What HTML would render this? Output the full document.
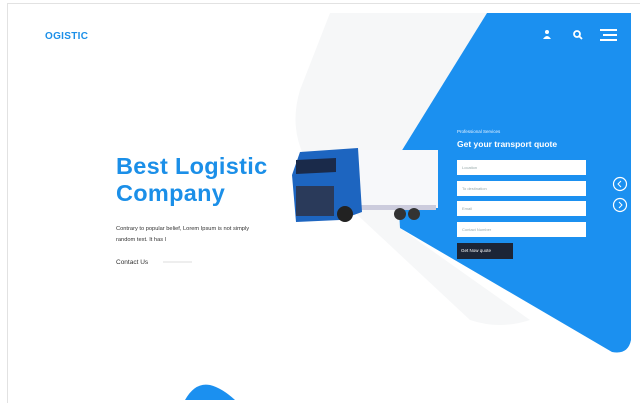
<!DOCTYPE html>
<html><head><meta charset="utf-8"><style>
*{margin:0;padding:0;box-sizing:border-box}
body{width:640px;height:400px;overflow:hidden;background:#fff;position:relative;font-family:"Liberation Sans",sans-serif}
.a{position:absolute}
.inp{position:absolute;left:457px;width:129px;height:15px;background:#fff;font-size:4px;color:#9aa;padding:5px 0 0 5px}
</style></head><body>
<div class="a" style="left:7px;top:3px;width:640px;height:1px;background:#e2e2e2"></div>
<div class="a" style="left:7px;top:3px;width:1px;height:400px;background:#e2e2e2"></div>
<svg class="a" style="left:0;top:0" width="640" height="400">
<path d="M330 13 L487 13 L470 60 L395 160 L400 228 L530 320 Q500 330 470 320 L320 180 Q285 140 300 90 Z" fill="#f6f7f8"/>
<path d="M487 13 L631 13 L631 340 Q628 355 612 352 L400 228 L396 160 Z" fill="#1b90f0"/>
<path d="M185 400 Q195 382 210 385 Q222 388 235 400 Z" fill="#1b90f0"/>
<rect x="358" y="150" width="80" height="58" fill="#f7f8fa"/>
<rect x="358" y="205" width="78" height="5" fill="#ccd"/>
<path d="M300 152 L358 148 L362 212 L340 220 L296 222 L292 175 Z" fill="#1d65c0"/>
<path d="M296 160 L336 158 L336 172 L296 174 Z" fill="#1a2a4a"/>
<rect x="296" y="186" width="38" height="30" fill="#2a3a5a"/>
<circle cx="345" cy="214" r="8" fill="#222"/>
<circle cx="400" cy="214" r="6" fill="#333"/>
<circle cx="414" cy="214" r="6" fill="#333"/>
<circle cx="620" cy="184" r="6.5" fill="none" stroke="#fff" stroke-width="1.2"/>
<circle cx="620" cy="205" r="6.5" fill="none" stroke="#fff" stroke-width="1.2"/>
<path d="M621 181 L618 184 L621 187" fill="none" stroke="#fff" stroke-width="1"/>
<path d="M619 202 L622 205 L619 208" fill="none" stroke="#fff" stroke-width="1"/>
<circle cx="547" cy="32" r="2" fill="#fff"/><path d="M543 39 Q547 33 551 39 Z" fill="#fff"/>
<circle cx="577" cy="34" r="3" fill="none" stroke="#fff" stroke-width="1.8"/><path d="M579 36 L582 39" stroke="#fff" stroke-width="1.8"/>
<path d="M600 30 H617 M603 35 H617 M600 40 H617" stroke="#fff" stroke-width="2"/>
<line x1="163" y1="262" x2="192" y2="262" stroke="#bbb" stroke-width="0.6"/>
</svg>
<div class="a" style="left:45px;top:31px;font-size:10px;font-weight:bold;color:#1b8fe8;letter-spacing:0.3px">OGISTIC</div>
<div class="a" style="left:116px;top:153px;font-size:23.5px;font-weight:bold;color:#1b8fe8;line-height:27px;letter-spacing:0.3px">Best Logistic<br>Company</div>
<div class="a" style="left:116px;top:224px;font-size:5.7px;color:#333;line-height:11px;width:152px">Contrary to popular belief, Lorem Ipsum is not simply random text. It has l</div>
<div class="a" style="left:116px;top:259px;font-size:6.5px;color:#333">Contact Us</div>
<div class="a" style="left:457px;top:129px;font-size:4.5px;color:#e8f3ff">Professional Services</div>
<div class="a" style="left:457px;top:139px;font-size:8.5px;color:#fff;font-weight:bold">Get your transport quote</div>
<div class="inp" style="top:160px">Location</div>
<div class="inp" style="top:181px">To destination</div>
<div class="inp" style="top:201px">Email</div>
<div class="inp" style="top:222px">Contact Number</div>
<div class="a" style="left:457px;top:243px;width:56px;height:16px;background:#1c2536;color:#fff;font-size:4.5px;padding:5px 0 0 4px">Get Now quote</div>
</body></html>
